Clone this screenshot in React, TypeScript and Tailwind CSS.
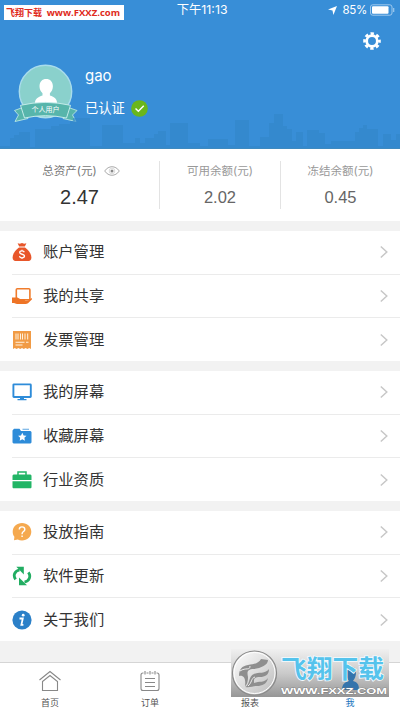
import React from 'react';

const ORANGE_RED = '#e8562a';

function MoneyBag() {
  return (
    <svg viewBox="0 0 20 20" className="h-5 w-5">
      <path d="M5.6 1.2l2.2.6 2.2-.8 2.2.8 2.2-.6-1.6 3.4H7.2z" fill={ORANGE_RED} />
      <path d="M7 5.6h6c3.4 2.2 6.4 6.4 6.4 9.8 0 2.6-1.4 3.6-4 3.6H4.600C2 19 .6 18 .6 15.400.6 12 3.600 7.800 7 5.600z" fill={ORANGE_RED} />
      <path d="M12.300 10.300c-.3-1-1.200-1.500-2.300-1.500-1.300 0-2.300.6-2.300 1.700 0 2.400 4.800 1.100 4.800 3.500 0 1.200-1.100 1.800-2.500 1.800-1.300 0-2.300-.6-2.500-1.700" fill="none" stroke="#fff" strokeWidth="1.300" />
      <path d="M10 7.800v1M10 15.800v1" stroke="#fff" strokeWidth="1.200" />
    </svg>
  );
}

function ShareHand() {
  return (
    <svg viewBox="0 0 20 20" className="h-5 w-5">
      <rect x="4.300" y="2.700" width="13.600" height="11" rx="1" fill="#fff" stroke="#f07c2c" strokeWidth="1.600" />
      <path d="M0 11.500h5.500l3 1.800h4c1.200 0 1.200 1.200 0 1.400l4-.5 2.300-1.700c1-.5 1.700.3 1 1.100L16 17.300c-.7.600-1.500.7-2.500.7H5c-1.500 0-2-1-3-1H0z" fill="#ee7426" />
    </svg>
  );
}

function Invoice() {
  return (
    <svg viewBox="0 0 20 20" className="h-5 w-5">
      <path d="M1 1h18v18l-1.800-1-1.800 1-1.800-1-1.800 1-1.800-1-1.800 1-1.800-1-1.800 1-1.800-1L1 19z" fill="#f19b45" />
      <path d="M4 3.500v6M6 3.500v6M8.500 3.500v6M10.500 3.500v6M13 3.500v6M15.700 3.500v6" stroke="#fff2df" strokeWidth="1" />
      <path d="M3.500 12.300h9M3.500 15h7M14 12.300h2.500" stroke="#fff2df" strokeWidth="1.100" />
    </svg>
  );
}

function Screen() {
  return (
    <svg viewBox="0 0 20 20" className="h-5 w-5">
      <rect x="1.400" y="2.400" width="17.400" height="12.600" rx=".5" fill="#fff" stroke="#2e8cd9" strokeWidth="1.900" />
      <path d="M8 15.300h4v1.600h2.500v1.300h-9v-1.300H8z" fill="#2e8cd9" />
    </svg>
  );
}

function StarFolder() {
  return (
    <svg viewBox="0 0 20 20" className="h-5 w-5">
      <path d="M.5 6V4.500L2 2.700h5.500L9 5h9.500l1 1v10.500l-1 1h-17l-1-1z" fill="#2e8cd9" />
      <path d="M10.500 3.300h6.500" stroke="#78b5e7" strokeWidth="1.200" />
      <path d="M10.300 6.700l1.300 2.700 2.900.4-2.100 2 .5 2.900-2.600-1.400-2.600 1.400.5-2.900-2.100-2 2.900-.4z" fill="#fff" />
    </svg>
  );
}

function Briefcase() {
  return (
    <svg viewBox="0 0 20 20" className="h-5 w-5">
      <path d="M6 5V2h8v3" fill="none" stroke="#22b566" strokeWidth="1.500" />
      <path d="M1.500 4.500h17l1 1v4.600H.5V5.500zM.5 11.300h19v6.300l-.7.700H1.200l-.7-.7z" fill="#22b566" />
    </svg>
  );
}

function Question() {
  return (
    <svg viewBox="0 0 20 20" className="h-5 w-5">
      <path d="M10 1c5.300 0 9.300 3.800 9.300 8.800s-4 8.700-9.300 8.700c-1.700 0-3-.3-4.300-.9L2 18.300l.4-3.500C1.300 13.400.7 11.700.7 9.800.7 4.800 4.700 1 10 1z" fill="#f5a94f" />
      <path d="M7.300 7.500c0-1.700 1.100-2.600 2.700-2.600s2.800 1 2.800 2.500c0 2.200-2.700 2-2.700 4.300v.5M10.100 13.500v1.600" fill="none" stroke="#fff" strokeWidth="1.400" />
    </svg>
  );
}

function Refresh() {
  return (
    <svg viewBox="0 0 20 20" className="h-5 w-5">
      <path d="M3.600 13.300C.8 9.500 2.500 5 7.500 4" fill="none" stroke="#22ad62" strokeWidth="2.800" />
      <path d="M4.300.8h7.500v7.700z" fill="#22ad62" />
      <path d="M16.400 6.300c2.800 3.800 1.100 8.700-3.900 9.700" fill="none" stroke="#22ad62" strokeWidth="2.800" />
      <path d="M15 19.200H7v-7.700z" fill="#22ad62" />
    </svg>
  );
}

function Info() {
  return (
    <svg viewBox="0 0 20 20" className="h-5 w-5">
      <circle cx="10" cy="10" r="9.600" fill="#2b80c8" />
      <circle cx="11.200" cy="5.200" r="1.400" fill="#fff" />
      <path d="M7.500 8.500h3.300l-1.400 6.300h2" fill="none" stroke="#fff" strokeWidth="1.800" />
    </svg>
  );
}

function Avatar() {
  return (
    <svg viewBox="0 0 60 60" className="h-[60px] w-[60px] shrink-0 overflow-visible">
      <circle cx="30.500" cy="27.500" r="26.200" fill="#8ad1cc" stroke="#a9dcec" strokeWidth="1.400" />
      <path d="M20 42v-3c0-4 3-6 7.500-7.500v-2.200c-1.800-1.800-3-4-3-7 0-4.600 2.800-7.300 6.700-7.300s6.700 2.700 6.700 7.300c0 3-1.200 5.200-3 7v2.200C39.500 33 42 35 42 39v3z" fill="#fff" />
      <path d="M9 43L-.5 46.500 3.500 51 0 57.500 13 54.500zM52 43l10 3.500-4.500 4.500 3.500 6.500-13-3z" fill="#57b5ab" stroke="#b9e5e5" strokeWidth=".9" />
      <path d="M5.500 41.300q25-5.800 50 0L51.500 54q-21-4.600-42 0z" fill="#57b5ab" stroke="#c4ebe9" strokeWidth="1" />
      <text x="30.500" y="47.800" textAnchor="middle" fontSize="7" fill="#fff" className="font-['Noto_Sans_CJK_SC',sans-serif]">个人用户</text>
    </svg>
  );
}

function Skyline() {
  return (
    <svg viewBox="0 0 400 35" className="block h-[35px] w-[400px]">
      <path
        d="M0 32h10v-8h4v-3h5v-3h11v15h5V15h16v-3h8V10h11V7h3V4h17v28h12V11h21v18h12v-5h5v5h5v-5h9v-4h4v-3h8v14h4V9h18v20h12v3h8v-7h20v6h7V6h14v26h11v-9h9V9h5V0h9v12h4v3h5v12h4v-9h7v14h4V16h12v3h6v11h6v-3h24v-9h4v-4h4v-3h4v4h11v17h5V20h8v6h5v-6h5v-4h4v19H0z"
        fill="#3387c9"
        opacity=".65"
      />
      <path d="M0 34.500h400" stroke="#3f8abf" strokeWidth="1" />
    </svg>
  );
}

function Gear() {
  return (
    <svg viewBox="0 0 20 20" className="h-[18px] w-[18px]">
      <circle cx="10" cy="10" r="5.900" fill="none" stroke="#fff" strokeWidth="3" />
      <circle cx="10" cy="10" r="8.300" fill="none" stroke="#fff" strokeWidth="3" strokeDasharray="3.700 2.819" strokeDashoffset="1.850" />
    </svg>
  );
}

function Row({ icon, label }: { icon: React.ReactNode; label: string }) {
  return (
    <div className="flex flex-1 items-center pl-3">
      {icon}
      <span className="ml-[11px] flex-1 text-[15.300px] leading-5 text-[#333]">{label}</span>
      <svg viewBox="0 0 8 14" className="mr-3 h-3.5 w-2">
        <path d="M.8 1.500L6.800 7l-6 5.500" fill="none" stroke="#c7c7c7" strokeWidth="1.500" />
      </svg>
    </div>
  );
}

function Group({ rows }: { rows: [React.ReactNode, string][] }) {
  return (
    <div className="flex h-[130px] flex-col bg-white">
      {rows.map(([icon, label], i) => (
        <React.Fragment key={label}>
          {i > 0 && <div className="ml-3 h-px bg-[#ebebeb]" />}
          <Row icon={icon} label={label} />
        </React.Fragment>
      ))}
    </div>
  );
}

function Tab({ label, active, children }: { label: string; active?: boolean; children: React.ReactNode }) {
  return (
    <div className="flex flex-1 flex-col items-center pt-[7px]">
      {children}
      <span className={`mt-[5px] text-[9px] leading-3 ${active ? 'text-[#2074bd]' : 'text-[#555]'}`}>{label}</span>
    </div>
  );
}

function Watermark() {
  return (
    <svg viewBox="0 0 158 48" className="absolute left-[231px] top-[649px] h-12 w-[158px]">
      <defs>
        <linearGradient id="panel" x1="0" y1="0" x2="0" y2="1">
          <stop offset="0" stopColor="#f0f0f0" />
          <stop offset=".5" stopColor="#cbcbcb" />
          <stop offset="1" stopColor="#969696" />
        </linearGradient>
        <linearGradient id="disc" x1="0" y1="0" x2="1" y2="1">
          <stop offset="0" stopColor="#fff" />
          <stop offset="1" stopColor="#bbb" />
        </linearGradient>
      </defs>
      <rect width="158" height="48" fill="url(#panel)" />
      <path d="M111 41c0-6 3-8 7-9-3-4-4-10-3-17l4 3c4-1 6 1 6 5s-1 6-3 9c4 1 6 3 6 9z" fill="#3474ac" />
      <circle cx="23.500" cy="24" r="22" fill="url(#disc)" stroke="#898989" strokeWidth="1.200" />
      <circle cx="23.500" cy="24" r="20.500" fill="none" stroke="#fff" strokeWidth="1" />
      <g fill="#8e8e8e">
        <path d="M8 27c0-7 3-10 9-11 7-1 11-2 13-6l7 1c0 5-7 8-14 9-7 0-7 3-6 8 0 4-1 8-3 9 1-7-1-11-6-10z" />
        <path d="M14 38c5-1 3-11 9-13 4-2 12 0 15-5 0 6-4 8-9 8-7 0-6 3-6 6 5-2 11 0 14-5-1 6-6 8-11 8-4 0-7 2-12 1z" />
      </g>
      <path d="M9 22c6-4 10 0 10-5M17 37c4-3 3-8 7-9" fill="none" stroke="#eee" strokeWidth="1" />
      <text x="50" y="28.800" fontSize="24.500" fontWeight="700" textLength="103" lengthAdjust="spacingAndGlyphs" fill="#55c3ec" stroke="#f4fbff" strokeWidth="1.600" paintOrder="stroke" className="font-['Noto_Sans_CJK_SC',sans-serif]">飞翔下载</text>
      <text x="50" y="45.300" fontSize="9.500" fontWeight="700" textLength="106" lengthAdjust="spacingAndGlyphs" fill="#fff" stroke="#777" strokeWidth=".7" paintOrder="stroke" className="font-['Liberation_Sans',sans-serif]">WWW.FXXZ.COM</text>
    </svg>
  );
}

export default function App() {
  return (
    <div className="relative flex h-[710px] w-[400px] flex-col overflow-hidden bg-[#f2f2f2] font-['Inter','Noto_Sans_CJK_SC',sans-serif]">
      <header className="flex h-[149px] shrink-0 flex-col bg-[#388ed7] text-white">
        <div className="flex h-5 items-center justify-end pr-[5px] text-[11.500px] leading-5">
          <span className="mr-[100px] whitespace-nowrap text-[12.300px]">下午11:13</span>
          <svg viewBox="0 0 10 10" className="mr-1.5 h-[9px] w-[9px]">
            <path d="M10 0L6 10 5 5 0 4z" fill="#fff" />
          </svg>
          <span className="mr-[3px] tracking-[-0.3px]">85%</span>
          <svg viewBox="0 0 25 12" className="h-3 w-[25px]">
            <rect x=".5" y=".8" width="21.500" height="10.400" rx="2.200" fill="none" stroke="#9fc9ed" />
            <rect x="2" y="2.300" width="16.500" height="7.400" rx="1" fill="#fff" />
            <path d="M23.700 4v4" stroke="#9fc9ed" strokeWidth="1.200" />
          </svg>
        </div>
        <div className="flex justify-end pr-[19px] pt-3">
          <Gear />
        </div>
        <div className="flex h-16 items-start pl-[15px] pt-[14px]">
          <Avatar />
          <div className="ml-[10px] mt-0.5 flex flex-col">
            <span className="text-[15px] leading-5">gao</span>
            <span className="mt-[12px] flex items-center gap-1.5 text-[13.300px] leading-5">
              已认证
              <svg viewBox="0 0 18 18" className="h-[17px] w-[17px]">
                <circle cx="9" cy="9" r="8.800" fill="#6ab61c" />
                <path d="M4.800 9l3 3 5.700-5.800" fill="none" stroke="#fff" strokeWidth="1.500" />
              </svg>
            </span>
          </div>
        </div>
        <Skyline />
      </header>

      <section className="flex h-[72px] shrink-0 items-start bg-white pt-3 text-center">
        <div className="h-12 w-[160px] border-r border-[#e3e3e3]">
          <div className="flex items-center justify-center gap-[7px] pl-[3px] text-[11.500px] leading-5 text-[#777]">
            总资产(元)
            <svg viewBox="0 0 16 12" className="h-3 w-4">
              <path d="M.7 6C4.500.3 11.500.3 15.300 6 11.500 11.700 4.500 11.700.7 6z" fill="none" stroke="#aaa" />
              <circle cx="8" cy="6" r="2.800" fill="none" stroke="#ccc" strokeWidth=".7" />
              <circle cx="8" cy="6" r="1.500" fill="#888" />
            </svg>
          </div>
          <div className="mt-[2px] font-['Liberation_Sans',sans-serif] text-[20px] leading-7 text-[#333]">2.47</div>
        </div>
        <div className="h-12 w-[121px] border-r border-[#e3e3e3]">
          <div className="text-[11.500px] leading-5 text-[#999]">可用余额(元)</div>
          <div className="mt-[2px] font-['Liberation_Sans',sans-serif] text-[16.500px] leading-7 text-[#666]">2.02</div>
        </div>
        <div className="h-12 flex-1">
          <div className="text-[11.500px] leading-5 text-[#999]">冻结余额(元)</div>
          <div className="mt-[2px] font-['Liberation_Sans',sans-serif] text-[16.500px] leading-7 text-[#666]">0.45</div>
        </div>
      </section>

      <main className="mt-[10px] flex shrink-0 flex-col gap-[10px]">
        <Group rows={[[<MoneyBag />, '账户管理'], [<ShareHand />, '我的共享'], [<Invoice />, '发票管理']]} />
        <Group rows={[[<Screen />, '我的屏幕'], [<StarFolder />, '收藏屏幕'], [<Briefcase />, '行业资质']]} />
        <Group rows={[[<Question />, '投放指南'], [<Refresh />, '软件更新'], [<Info />, '关于我们']]} />
      </main>

      <nav className="mt-auto flex h-12 shrink-0 border-t border-[#d5d5d5] bg-white">
        <Tab label="首页">
          <svg viewBox="0 0 22 22" className="h-[22px] w-[22px]" fill="none" stroke="#888" strokeWidth="1.100">
            <path d="M.5 10L11 1.500 21.500 10" />
            <path d="M3.500 11.500L11 5.500l7.500 6v9h-15z" />
          </svg>
        </Tab>
        <Tab label="订单">
          <svg viewBox="0 0 22 22" className="h-[22px] w-[22px]" fill="none" stroke="#888" strokeWidth="1.100">
            <path d="M4.500 3H4a2 2 0 00-2 2v13.500a2 2 0 002 2h14a2 2 0 002-2V5a2 2 0 00-2-2h-.5M7.500 3h2M12.500 3h2M6 1v3.500M11 1v3.500M16 1v3.500M6 8.500h10M6 12.500h10M6 16.500h10" />
          </svg>
        </Tab>
        <Tab label="报表">
          <span className="h-[22px]" />
        </Tab>
        <Tab label="我" active>
          <span className="h-[22px]" />
        </Tab>
      </nav>

      <div className="absolute left-1 top-[5px] flex h-[15px] w-[120px] items-center justify-between bg-white pl-[2px] pr-1 font-bold text-[#e02a20]">
        <span className="whitespace-nowrap text-[9px] leading-[15px]">飞翔下载</span>
        <span className="whitespace-nowrap font-['Open_Sans',sans-serif] text-[9.500px] leading-[15px]">www.FXXZ.com</span>
      </div>
      <Watermark />
    </div>
  );
}
